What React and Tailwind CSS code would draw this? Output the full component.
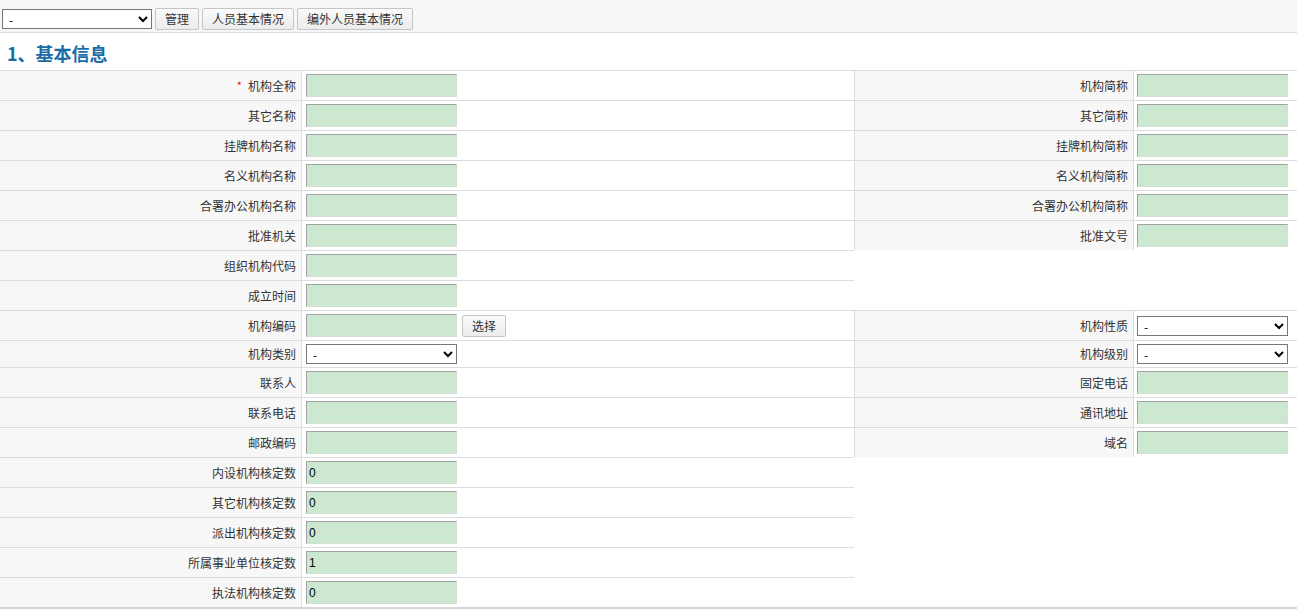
import React from 'react';

const font = { fontFamily: '"Noto Sans CJK SC", "Liberation Sans", sans-serif' };

// each row: left field, right field (null = empty cell)
const rows = [
  { h: 30, left: { label: '机构全称', required: true }, right: { label: '机构简称' } },
  { h: 30, left: { label: '其它名称' }, right: { label: '其它简称' } },
  { h: 30, left: { label: '挂牌机构名称' }, right: { label: '挂牌机构简称' } },
  { h: 30, left: { label: '名义机构名称' }, right: { label: '名义机构简称' } },
  { h: 30, left: { label: '合署办公机构名称' }, right: { label: '合署办公机构简称' } },
  { h: 30, left: { label: '批准机关' }, right: { label: '批准文号' } },
  { h: 30, left: { label: '组织机构代码' }, right: null },
  { h: 30, left: { label: '成立时间' }, right: null },
  { h: 30, left: { label: '机构编码', button: '选择' }, right: { label: '机构性质', select: true } },
  { h: 27, left: { label: '机构类别', select: true }, right: { label: '机构级别', select: true } },
  { h: 30, left: { label: '联系人' }, right: { label: '固定电话' } },
  { h: 30, left: { label: '联系电话' }, right: { label: '通讯地址' } },
  { h: 30, left: { label: '邮政编码' }, right: { label: '域名' } },
  { h: 30, left: { label: '内设机构核定数', value: '0' }, right: null },
  { h: 30, left: { label: '其它机构核定数', value: '0' }, right: null },
  { h: 30, left: { label: '派出机构核定数', value: '0' }, right: null },
  { h: 30, left: { label: '所属事业单位核定数', value: '1' }, right: null },
  { h: 30, left: { label: '执法机构核定数', value: '0' }, right: null },
];

const Btn = ({ children, className = '' }) => (
  <button
    className={`h-[22px] px-[9px] border border-[#c6c6c6] rounded-[2px] bg-gradient-to-b from-[#fafafa] to-[#ececec] text-[12px] text-[#333] leading-none ${className}`}
  >
    {children}
  </button>
);

const Select = ({ w = 'w-[151px]' }) => (
  <select
    defaultValue="-"
    className={`${w} h-[20px] border border-[#767676] bg-white text-[12px] text-black pl-[2px]`}
    style={{ appearance: 'auto' }}
  >
    <option value="-">-</option>
  </select>
);

const TextInput = ({ value = '' }) => (
  <input
    type="text"
    defaultValue={value}
    className="w-[151px] h-[23px] bg-[#cce8d0] border border-[#d3dfd3] border-t-[#a3a3a3] border-l-[#a3a3a3] px-[2px] text-[12px] text-black outline-none"
    style={{ fontFamily: '"Liberation Sans", sans-serif' }}
  />
);

const Label = ({ field, className = '' }) => (
  <div className={`flex items-center justify-end pr-[5px] bg-[#f7f7f7] text-[12px] text-[#333] ${className}`}>
    {field.required && <span className="text-[#e02020] mr-[6px] text-[11px]">*</span>}
    {field.label}
  </div>
);

const Field = ({ field, className = '' }) => (
  <div className={`flex items-center gap-[5px] bg-white border-[#dcdcdc] ${className}`}>
    {field.select ? <Select /> : <TextInput value={field.value} />}
    {field.button && <Btn className="h-[22px]">{field.button}</Btn>}
  </div>
);

export default function App() {
  return (
    <div className="w-[1297px] h-[615px] bg-white overflow-hidden" style={font}>
      {/* toolbar */}
      <div className="h-[33px] flex items-center gap-[3px] pl-[2px] pt-[8px] pb-[2px] bg-[#f5f6f7] border-b border-[#d9d9d9]">
        <select
          defaultValue="-"
          className="w-[150px] h-[20px] border border-[#767676] bg-white text-[12px] text-black pl-[2px]"
          style={{ appearance: 'auto' }}
        >
          <option value="-">-</option>
        </select>
        <Btn>管理</Btn>
        <Btn>人员基本情况</Btn>
        <Btn>编外人员基本情况</Btn>
      </div>

      {/* heading */}
      <div className="h-[37px] flex items-center pl-[7px] pt-[3px] text-[18px] font-bold text-[#1a6ca6]">
        1、基本信息
      </div>

      {/* form table */}
      <div className="border-b-2 border-[#d6d6d6]">
        {rows.map((row, i) => (
          <div
            key={i}
            className="grid grid-cols-[302px_552px_279px_164px]"
            style={{ height: row.h }}
          >
            <Label field={row.left} className="border-t border-r border-[#dcdcdc] border-r-[#e3e3e3]" />
            <Field field={row.left} className="border-t pl-[4px]" />
            {row.right ? (
              <>
                <Label field={row.right} className="border-t border-l border-[#dcdcdc]" />
                <Field field={row.right} className="border-t border-l pl-[3px]" />
              </>
            ) : (
              <div className="col-span-2 bg-white" />
            )}
          </div>
        ))}
      </div>
    </div>
  );
}
